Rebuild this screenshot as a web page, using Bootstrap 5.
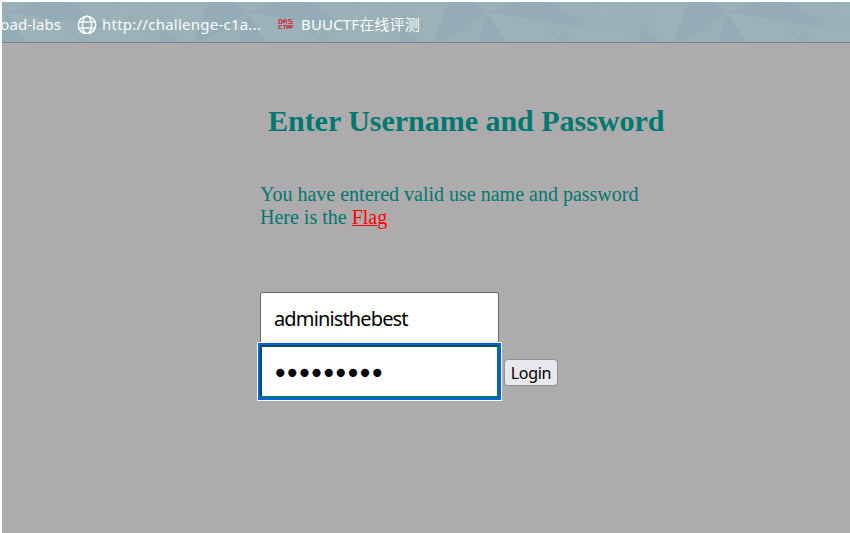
<!DOCTYPE html>
<html lang="en">
<head>
<meta charset="utf-8">
<meta name="viewport" content="width=device-width, initial-scale=1">
<title>Login</title>
<link href="https://cdn.jsdelivr.net/npm/bootstrap@5.3.0/dist/css/bootstrap.min.css" rel="stylesheet">
<style>
body{background:#fff;height:533px;overflow:hidden;padding:2px 0 0 2px}
.bookmarks{height:41px;background:#99b0b8;border-bottom:1px solid #74858f;overflow:hidden}
.facets{left:0;top:0;width:848px;height:40px}
.bookmark-text{font:15px/20px "Noto Sans","Noto Sans CJK SC",sans-serif;color:#f8fdfd;white-space:nowrap}
.marks-row{height:40px;padding-top:3px}
.first-mark{width:59px;display:flex;justify-content:flex-end;letter-spacing:.05px}
.globe{margin-left:16px}
.url-text{width:160px;margin-left:5px;letter-spacing:.24px}
.das-icon{margin:0 8px 0 16px}
.buu-text{letter-spacing:.15px}
.page-area{height:490px;background:#adabab;padding-left:258px;color:#007872;font-family:"Liberation Serif",serif}
.page-title{font-size:30px;line-height:34px;font-weight:700;padding:61px 0 0 8px;margin:0;color:#007872;white-space:nowrap;letter-spacing:-.02px}
.message{font-size:20px;line-height:23px;margin:45px 0 0}
.message a{color:#f00;text-decoration-thickness:1px}
.login-form{margin-top:63px}
.login-form input{display:block;width:239px;height:53px;padding:0 13px;border:1px solid #67677a;border-radius:2px;background:#fff;color:#000;font:20px "Noto Sans",sans-serif;letter-spacing:-.86px;outline:0}
.login-form input.secret{border:2px solid #007872;border-top-color:#004f4d;border-left-color:#004f4d;border-radius:0;padding:4px 10px 0;font:28px "DejaVu Sans",sans-serif;letter-spacing:-4.4px;box-shadow:0 0 0 2px #0061e0,0 0 0 3px #fff;position:relative}
.login-button{width:54px;height:27px;margin:2px 0 0 5px;padding:0;border:1px solid #8f8f9d;border-radius:4px;background:#e9e9ed;color:#000;font:16px/24px "Noto Sans",sans-serif;letter-spacing:-.3px}
</style>
<script src="https://cdn.jsdelivr.net/npm/bootstrap@5.3.0/dist/js/bootstrap.bundle.min.js"></script>
</head>
<body>
<nav class="bookmarks position-relative">
<svg class="facets position-absolute" viewBox="2 2 848 40" aria-hidden="true">
<defs><pattern id="facet" x="547" y="0" width="240" height="44" patternUnits="userSpaceOnUse" viewBox="547 0 240 44">
<path fill="#99b0b7" d="M547 0h240v44H547z"/>
<path fill="#94acb6" d="M547 0 587 28 547 22zM689 0 673 44H681L727 12 708 0zM727 12 717 44H748zM727 12 760 0H787V22zM641 28 639 44H663z"/>
<path fill="#9cb2b9" d="M587 28 602 0H634zM649 0 664 44H673L689 0zM727 12 787 22V44H748zM565 28H641L624 44H547V40z"/>
<path fill="#9cb2b9" d="M727 12 735 0H756z"/>
<path fill="#96aeb7" d="M565 28 572 44H552z"/>
</pattern></defs><path fill="url(#facet)" d="M2 2h848v40H2z"/>
</svg>
<div class="marks-row position-relative d-flex align-items-center">
<span class="bookmark-text first-mark">oad-labs</span>
<svg class="globe flex-shrink-0" width="20" height="20" viewBox="0 0 20 20" fill="none" stroke="#f8fdfd" stroke-width="1.5" aria-hidden="true"><circle cx="10" cy="11" r="8.7"/><ellipse cx="10" cy="11" rx="4.6" ry="8.7"/><path d="M2 8h16M2 14h16"/></svg>
<span class="bookmark-text url-text">http://challenge-c1a...</span>
<svg class="das-icon flex-shrink-0" width="15" height="11" viewBox="0 0 15 11" fill="none" stroke="#cf3449" stroke-width="1.2" aria-hidden="true"><path d="M1 1.500v4h2l1-1v-2l-1-1zM5.500 5.500v-3l1-1h1l1 1v3M5.500 3.500h3M14 1.500h-3v2h3v2h-4M4 7.500H1v3h3M5 7.500h3M6.500 7.500V11M9 11V7.500h2v2H9M12 11V7.500h2v2h-2"/></svg>
<span class="bookmark-text buu-text">BUUCTF在线评测</span>
</div>
</nav>
<main class="page-area">
<h1 class="page-title">Enter Username and Password</h1>
<p class="message">You have entered valid use name and password<br>Here is the <a href="#">Flag</a></p>
<form class="login-form">
<input type="text" value="administhebest" aria-label="Username">
<div class="d-flex align-items-center"><input class="secret" type="password" value="password1" aria-label="Password"><button class="login-button" type="button">Login</button></div>
</form>
</main>
</body>
</html>
